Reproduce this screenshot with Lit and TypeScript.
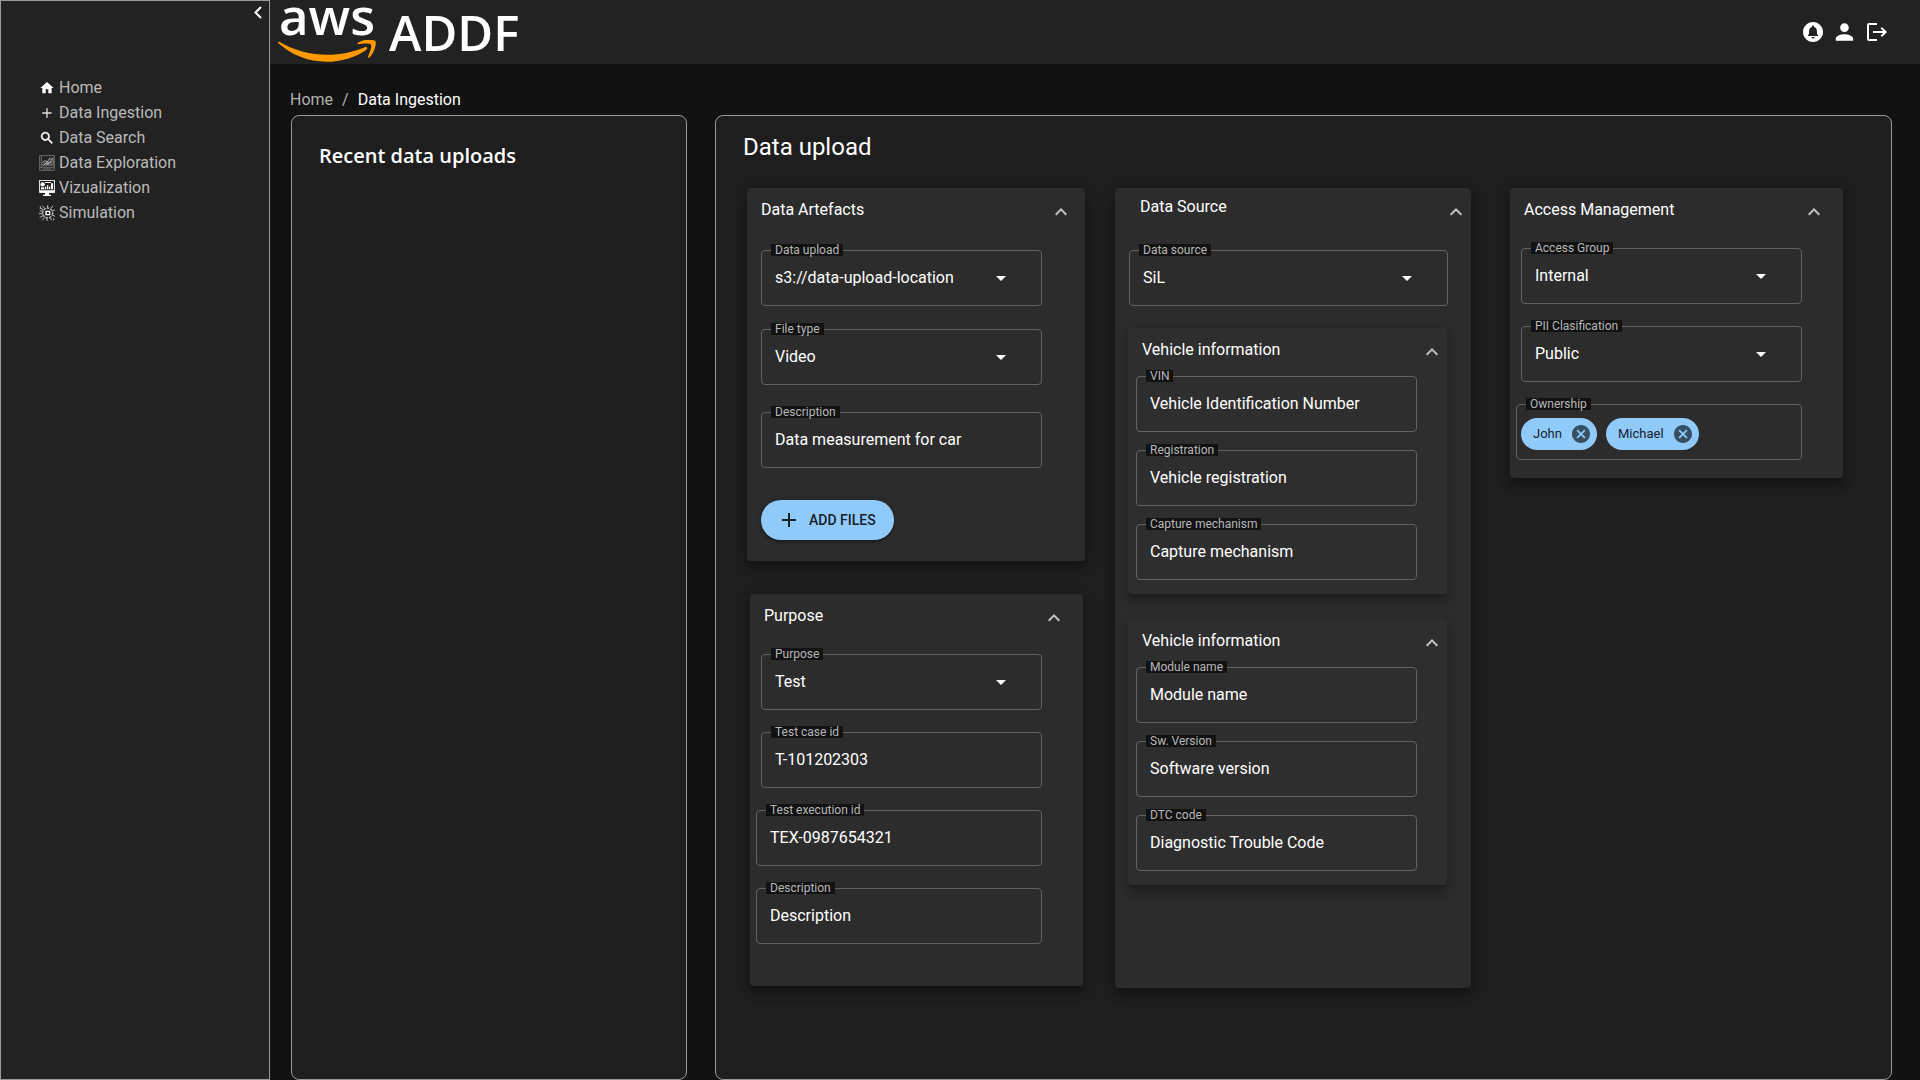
import { LitElement, html, css, svg, nothing, TemplateResult } from "lit";
import { customElement, state } from "lit/decorators.js";
import { classMap } from "lit/directives/class-map.js";

interface Field {
  id: string;
  label: string;
  value: string;
  kind?: "select" | "text";
  wide?: boolean;
}

const ARTEFACTS: Field[] = [
  { id: "upload-location", label: "Data upload", value: "s3://data-upload-location", kind: "select" },
  { id: "file-type", label: "File type", value: "Video", kind: "select" },
];

const PURPOSE: Field[] = [
  { id: "purpose", label: "Purpose", value: "Test", kind: "select" },
  { id: "test-case", label: "Test case id", value: "T-101202303" },
  { id: "test-execution", label: "Test execution id", value: "TEX-0987654321", wide: true },
  { id: "purpose-description", label: "Description", value: "Description", wide: true },
];

const VEHICLE: Field[] = [
  { id: "vin", label: "VIN", value: "Vehicle Identification Number" },
  { id: "registration", label: "Registration", value: "Vehicle registration" },
  { id: "capture", label: "Capture mechanism", value: "Capture mechanism" },
];

const MODULE: Field[] = [
  { id: "module-name", label: "Module name", value: "Module name" },
  { id: "sw-version", label: "Sw. Version", value: "Software version" },
  { id: "dtc-code", label: "DTC code", value: "Diagnostic Trouble Code" },
];

const ACCESS: Field[] = [
  { id: "access-group", label: "Access Group", value: "Internal", kind: "select" },
  { id: "pii", label: "PII Clasification", value: "Public", kind: "select" },
];

const NAV: { text: string; icon: TemplateResult }[] = [
  { text: "Home", icon: svg`<path fill="#fff" d="M10 20v-6h4v6h5v-8h3L12 3 2 12h3v8z"/>` },
  { text: "Data Ingestion", icon: svg`<path fill="#e0e0e0" d="M19 13h-6v6h-2v-6H5v-2h6V5h2v6h6v2z"/>` },
  {
    text: "Data Search",
    icon: svg`<path fill="#fff" stroke="#fff" stroke-width=".6" d="M15.5 14h-.79l-.28-.27C15.41 12.59 16 11.11 16 9.5 16 5.91 13.09 3 9.5 3S3 5.91 3 9.5 5.91 16 9.5 16c1.61 0 3.09-.59 4.23-1.57l.27.28v.79l5 4.99L20.49 19l-4.99-5zm-6 0C7.01 14 5 11.99 5 9.5S7.01 5 9.5 5 14 7.01 14 9.5 11.99 14 9.5 14z"/>`,
  },
  {
    text: "Data Exploration",
    icon: svg`<g fill="none" stroke="#8c8c8c">
      <path stroke-width="1.3" stroke="#777" d="M1 1h22v22H1zM3.5 1v18M1 19h22M6 21h12"/>
      <path stroke-width="1.6" d="M6 17v-4M9 17v-6M12 17v-8M15 17v-5M18 17V7M21 17V5"/>
      <path stroke-width="1.5" stroke="#b5b5b5" d="M5 12l4-4 3 3 4-6 3 2 2-3M11 14l5-4M7 15l4-3 3 2 4-5"/>
    </g>`,
  },
  {
    text: "Vizualization",
    icon: svg`<path fill="none" stroke="#ddd" stroke-width="1.6" d="M.8.8h22.4v17.4H.8z"/>
      <path fill="#fff" d="M1 15.5h22V19H1zM9 19h6v3h3v2H6v-2h3zM9 10h2v4H9zM12 8h2v6h-2zM15 10h2v4h-2zM18 5h3v9h-3zM9 3h9v1.500H9z"/>
      <circle cx="5.500" cy="6.500" r="3.300" fill="#fff"/><path fill="#fff" d="M3 11h5v3H3z"/>`,
  },
  {
    text: "Simulation",
    icon: svg`<g fill="none" stroke="#bbb" stroke-width="1.5">
      <circle cx="13" cy="12" r="7.500" stroke-width="2" stroke-dasharray="4 1.500"/>
      <path d="M13 4V0M8 5L5 1M18 5l3-4M20 9l4-2M20 15l4 2M17 19l2 4M12 20v4M8 19l-3 4M6 9H1M6 13H0M6 16l-5 3M3 5l3 2M2 2v4M22 20v3"/>
      <path stroke="#fff" stroke-width="2" d="M10.500 9.500h5.500v5h-5.500z"/>
    </g>`,
  },
];

@customElement("app-root")
export class AppRoot extends LitElement {
  @state() private closed = new Set<string>();
  @state() private owners = ["John", "Michael"];

  static styles = css`
    :host {
      display: block;
      font: 400 16px/24px Roboto, "Liberation Sans", sans-serif;
      color: #fff;
      background: #121212;
    }
    * {
      box-sizing: border-box;
    }
    h1, h2, h3, ul, ol {
      margin: 0;
      padding: 0;
      font: inherit;
      list-style: none;
    }
    svg {
      display: block;
      flex: none;
    }
    a {
      color: inherit;
      text-decoration: none;
    }
    button {
      font: inherit;
      color: inherit;
      background: none;
      border: 0;
      padding: 0;
      cursor: pointer;
    }
    .page {
      display: grid;
      grid-template-columns: 270px minmax(0, 1fr);
      min-height: 100vh;
    }
    .sidebar {
      display: flex;
      flex-direction: column;
      background: #222;
      border: 1px solid #999;
    }
    .fold {
      align-self: flex-end;
      padding: 5px 7px 0 0;
    }
    .nav {
      padding: 56px 0 0 38px;
    }
    .nav a {
      display: flex;
      align-items: center;
      gap: 4px;
      height: 25px;
      color: #bababa;
    }
    .content {
      display: flex;
      flex-direction: column;
      min-width: 0;
    }
    .header {
      display: flex;
      align-items: center;
      justify-content: space-between;
      height: 64px;
      padding: 0 31px 0 8px;
      background: #222;
    }
    .brand {
      display: flex;
      align-items: center;
      gap: 13px;
      font-family: "Open Sans", "Noto Sans", sans-serif;
      font-weight: 600;
    }
    .mark {
      display: flex;
      flex-direction: column;
      align-items: center;
    }
    .aws {
      height: 38px;
      font-size: 51px;
      line-height: 26px;
    }
    .product {
      font-size: 49px;
      line-height: 62px;
    }
    .tools {
      display: flex;
      align-items: center;
      gap: 7px;
    }
    .crumbs {
      display: flex;
      gap: 9px;
      padding: 24px 20px 3px;
      color: #b0b0b0;
    }
    .crumbs [aria-current] {
      color: #fff;
    }
    .panels {
      flex: 1;
      display: grid;
      grid-template-columns: minmax(0, 396fr) minmax(0, 1177fr);
      gap: 28px;
      padding: 0 28px 0 21px;
    }
    .panel {
      background: #1e1e1e;
      border: 1px solid #999;
      border-radius: 8px;
    }
    .recent {
      padding: 27px;
    }
    .recent h2 {
      font: 600 20px/26px "Open Sans", "Noto Sans", sans-serif;
    }
    .upload {
      padding: 15px 48px 24px 31px;
    }
    .upload > h1 {
      font-size: 24px;
      line-height: 32px;
      margin: 0 0 25px -4px;
    }
    .columns {
      display: grid;
      grid-template-columns: minmax(0, 338fr) minmax(0, 356fr) minmax(0, 342fr);
      gap: 30px;
      align-items: start;
    }
    .column {
      display: flex;
      flex-direction: column;
      gap: 33px;
    }
    .column.access {
      padding-left: 9px;
    }
    .card {
      background: #2c2c2c;
      border-radius: 4px;
      box-shadow: 0 5px 5px -3px rgba(0, 0, 0, 0.2), 0 8px 10px 1px rgba(0, 0, 0, 0.14),
        0 3px 14px 2px rgba(0, 0, 0, 0.12);
    }
    .head {
      display: flex;
      justify-content: space-between;
      padding: 10px 17px 0 14px;
      height: 60px;
    }
    .head button {
      height: 24px;
      margin-top: 2px;
    }
    .body {
      display: flex;
      flex-direction: column;
      gap: 22px;
      padding: 0 41px 18px 11px;
    }
    .artefacts .head {
      height: 62px;
      padding-right: 12px;
    }
    .artefacts .body {
      gap: 27px;
      padding: 0 43px 21px 14px;
    }
    .purpose {
      margin: 0 2px 0 3px;
    }
    .purpose .body {
      padding-bottom: 42px;
    }
    .source > .head {
      height: 62px;
      padding: 7px 3px 0 25px;
    }
    .source > .head button {
      margin-top: 5px;
    }
    .source > .body {
      padding: 0 23px 103px 14px;
    }
    .group {
      display: flex;
      flex-direction: column;
      gap: 23px;
    }
    .group.nested {
      gap: 25px;
      margin: 0 1px 0 -1px;
    }
    .vehicle .head {
      height: 48px;
      padding-right: 3px;
    }
    .vehicle {
      background: #2e2e2e;
    }
    .vehicle .body {
      gap: 18px;
      padding: 0 30px 14px 8px;
    }
    .field {
      position: relative;
      display: grid;
      grid-template-columns: minmax(0, 1fr);
      align-items: center;
      height: 56px;
      border: 1px solid #626262;
      border-radius: 4px;
    }
    .field.wide {
      margin-left: -5px;
    }
    .field > label {
      position: absolute;
      top: -7px;
      left: 9px;
      height: 12px;
      padding: 0 4px;
      font-size: 12px;
      line-height: 13px;
      white-space: nowrap;
      color: #b8b8b8;
      background: #121212;
    }
    .field > select,
    .field > input {
      grid-area: 1 / 1;
      width: 100%;
      height: 54px;
      margin: 0;
      padding: 0 13px 1px;
      font: inherit;
      color: #fff;
      background: transparent;
      border: 0;
      appearance: none;
    }
    .field > select {
      padding-right: 52px;
    }
    .field > .arrow {
      grid-area: 1 / 1;
      justify-self: end;
      margin-right: 28px;
      pointer-events: none;
    }
    option {
      background: #2c2c2c;
    }
    .actions {
      padding-top: 5px;
    }
    .add {
      display: flex;
      align-items: center;
      gap: 8px;
      height: 40px;
      padding: 0 18px 0 16px;
      border-radius: 20px;
      background: #90caf9;
      color: #15212b;
      font-size: 14px;
      font-weight: 500;
      box-shadow: 0 1px 5px rgba(0, 0, 0, 0.3), 0 2px 2px rgba(0, 0, 0, 0.2);
    }
    .field.owners {
      display: flex;
      gap: 9px;
      padding: 4px 4px 0;
    }
    .field.owners > input {
      flex: 1;
      min-width: 0;
      height: 32px;
    }
    .chip {
      display: flex;
      align-items: center;
      gap: 10px;
      height: 32px;
      padding: 0 7px 0 12px;
      border-radius: 16px;
      background: #90caf9;
      color: #15212b;
      font-size: 13px;
    }
  `;

  private toggle(key: string) {
    const next = new Set(this.closed);
    next.has(key) ? next.delete(key) : next.add(key);
    this.closed = next;
  }

  private field(f: Field) {
    return html`
      <div class=${classMap({ field: true, wide: !!f.wide })}>
        <label for=${f.id}>${f.label}</label>
        ${f.kind === "select"
          ? html`<select id=${f.id}><option>${f.value}</option></select>
              <svg class="arrow" width="24" height="24" viewBox="0 0 24 24" aria-hidden="true">
                <path fill="#fff" d="M7 10l5 5 5-5z" />
              </svg>`
          : html`<input id=${f.id} type="text" .value=${f.value} />`}
      </div>
    `;
  }

  private card(key: string, kind: string, title: string, body: unknown) {
    const open = !this.closed.has(key);
    return html`
      <section class="card ${kind}">
        <div class="head">
          <h2>${title}</h2>
          <button aria-label="Toggle ${title}" aria-expanded=${open} @click=${() => this.toggle(key)}>
            <svg width="24" height="24" viewBox="0 0 24 24" aria-hidden="true">
              <path fill="#c4c4c4" d=${open
                ? "M12 8l-6 6 1.41 1.41L12 10.83l4.59 4.58L18 14z"
                : "M16.590 8.590L12 13.170 7.410 8.590 6 10l6 6 6-6z"} />
            </svg>
          </button>
        </div>
        ${open ? html`<div class="body">${body}</div>` : nothing}
      </section>
    `;
  }

  private chip(name: string) {
    return html`
      <span class="chip">${name}
        <button aria-label="Remove ${name}" @click=${() => (this.owners = this.owners.filter((o) => o !== name))}>
          <svg width="18" height="18" viewBox="2 2 20 20" aria-hidden="true">
            <path fill="#364f63" d="M12 2C6.470 2 2 6.470 2 12s4.470 10 10 10 10-4.470 10-10S17.530 2 12 2zm5 13.590L15.590 17 12 13.410 8.410 17 7 15.590 10.590 12 7 8.410 8.410 7 12 10.590 15.590 7 17 8.410 13.410 12 17 15.590z" />
          </svg>
        </button>
      </span>
    `;
  }

  render() {
    return html`
      <div class="page">
        <aside class="sidebar">
          <button class="fold" aria-label="Collapse menu">
            <svg width="8" height="13" viewBox="0 0 8 13" aria-hidden="true">
              <path fill="none" stroke="#fff" stroke-width="2" d="M7 1L1.500 6.500 7 12" />
            </svg>
          </button>
          <nav class="nav">
            <ul>
              ${NAV.map((n) => html`<li><a href="#">
                <svg width="16" height="16" viewBox="0 0 24 24" aria-hidden="true">${n.icon}</svg>${n.text}</a></li>`)}
            </ul>
          </nav>
        </aside>
        <div class="content">
          <header class="header">
            <div class="brand">
              <div class="mark">
                <span class="aws">aws</span>
                <svg width="98" height="22" viewBox="1.500 114 301.500 67.500" aria-hidden="true">
                  <path fill="#f90" d="M273.500 143.700c-32.900 24.300-80.700 37.200-121.800 37.200-57.600 0-109.500-21.300-148.700-56.700-3.100-2.800-.3-6.600 3.400-4.400 42.400 24.600 94.700 39.500 148.800 39.500 36.500 0 76.600-7.600 113.500-23.200 5.500-2.500 10.200 3.600 4.800 7.600z" />
                  <path fill="#f90" d="M287.200 128.100c-4.200-5.400-27.800-2.600-38.500-1.300-3.200.4-3.700-2.400-.8-4.500 18.800-13.200 49.700-9.400 53.300-5 3.600 4.500-1 35.400-18.600 50.200-2.700 2.300-5.300 1.100-4.100-1.900 4-9.900 12.900-32.200 8.700-37.500z" />
                </svg>
              </div>
              <span class="product">ADDF</span>
            </div>
            <div class="tools">
              <button aria-label="Notifications">
                <svg width="24" height="24" viewBox="0 0 24 24" aria-hidden="true">
                  <path fill="#fff" d="M12 2C6.480 2 2 6.480 2 12s4.480 10 10 10 10-4.480 10-10S17.520 2 12 2zm0 16.500c-.83 0-1.500-.67-1.500-1.500h3c0 .83-.67 1.500-1.500 1.500zm5-2.500H7v-1l1-1v-2.610C8 9.270 9.030 7.470 11 7v-.5c0-.57.430-1 1-1s1 .430 1 1V7c1.970.470 3 2.280 3 4.390V14l1 1v1z" />
                </svg>
              </button>
              <button aria-label="Account">
                <svg width="26" height="26" viewBox="0.500 0 24 24" aria-hidden="true">
                  <path fill="#fff" d="M12 12c2.210 0 4-1.790 4-4s-1.790-4-4-4-4 1.790-4 4 1.790 4 4 4zm0 2c-2.670 0-8 1.340-8 4v2h16v-2c0-2.660-5.330-4-8-4z" />
                </svg>
              </button>
              <button aria-label="Sign out">
                <svg width="24" height="24" viewBox="0 0 24 24" aria-hidden="true">
                  <path fill="#fff" d="M17 7l-1.410 1.410L18.170 11H8v2h10.170l-2.580 2.580L17 17l5-5zM4 5h8V3H4c-1.100 0-2 .9-2 2v14c0 1.100.9 2 2 2h8v-2H4V5z" />
                </svg>
              </button>
            </div>
          </header>
          <nav class="crumbs" aria-label="Breadcrumb">
            <a href="#">Home</a><span>/</span><a href="#" aria-current="page">Data Ingestion</a>
          </nav>
          <main class="panels">
            <section class="panel recent"><h2>Recent data uploads</h2></section>
            <section class="panel upload">
              <h1>Data upload</h1>
              <div class="columns">
                <div class="column">
                  ${this.card("artefacts", "artefacts", "Data Artefacts", html`
                    <div class="group">${ARTEFACTS.map((f) => this.field(f))}</div>
                    ${this.field({ id: "description", label: "Description", value: "Data measurement for car" })}
                    <div class="actions">
                      <button class="add">
                        <svg width="24" height="24" viewBox="0 0 24 24" aria-hidden="true">
                          <path fill="#15212b" d="M19 13h-6v6h-2v-6H5v-2h6V5h2v6h6v2z" />
                        </svg>ADD FILES
                      </button>
                    </div>`)}
                  ${this.card("purpose", "purpose", "Purpose", PURPOSE.map((f) => this.field(f)))}
                </div>
                <div class="column">
                  ${this.card("source", "source", "Data Source", html`
                    ${this.field({ id: "data-source", label: "Data source", value: "SiL", kind: "select" })}
                    <div class="group nested">
                      ${this.card("vehicle", "vehicle", "Vehicle information", VEHICLE.map((f) => this.field(f)))}
                      ${this.card("module", "vehicle", "Vehicle information", MODULE.map((f) => this.field(f)))}
                    </div>`)}
                </div>
                <div class="column access">
                  ${this.card("access", "", "Access Management", html`
                    ${ACCESS.map((f) => this.field(f))}
                    <div class="field wide owners">
                      <label for="owners">Ownership</label>
                      ${this.owners.map((o) => this.chip(o))}
                      <input id="owners" type="text" />
                    </div>`)}
                </div>
              </div>
            </section>
          </main>
        </div>
      </div>
    `;
  }
}
